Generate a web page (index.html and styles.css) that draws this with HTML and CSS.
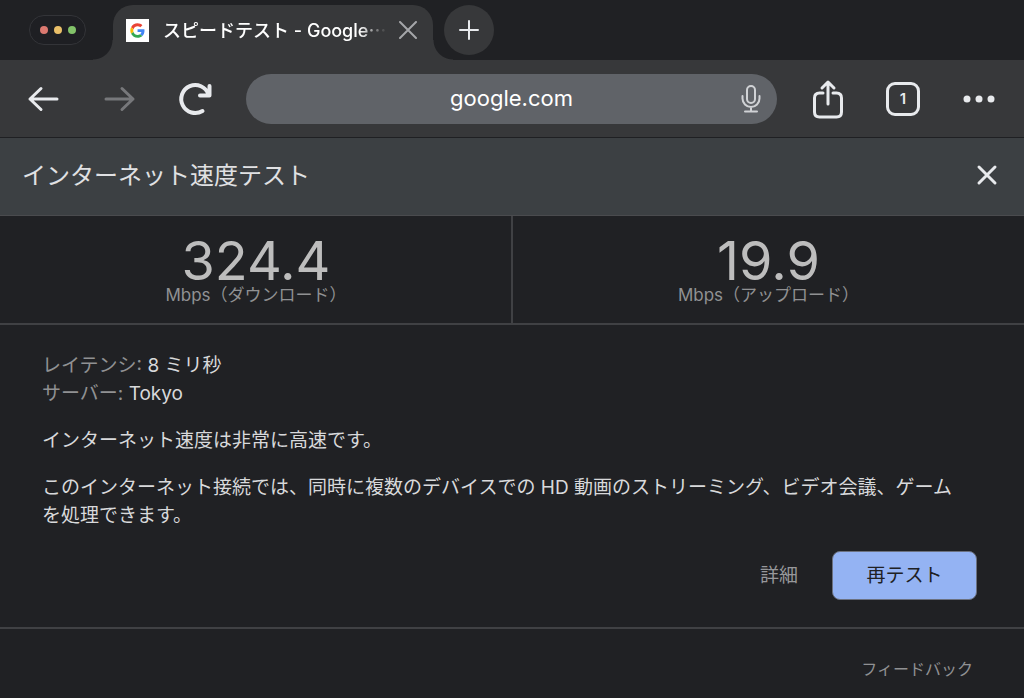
FILE: index.html
```html
<!DOCTYPE html>
<html lang="ja">
<head>
<meta charset="utf-8">
<meta name="viewport" content="width=device-width, initial-scale=1">
<title>スピードテスト - Google</title>
<link rel="stylesheet" href="styles.css">
</head>
<body>
<header class="browser">
  <div class="tabstrip">
    <div class="window-dots"><i class="dot dot-red"></i><i class="dot dot-yellow"></i><i class="dot dot-green"></i></div>
    <div class="tab">
      <svg class="favicon" viewBox="0 0 48 48" aria-hidden="true">
        <rect width="48" height="48" fill="#fff"/>
        <g transform="translate(9 9) scale(.63)">
          <path fill="#EA4335" d="M24 9.500c3.540 0 6.710 1.220 9.210 3.600l6.850-6.850C35.900 2.380 30.470 0 24 0 14.620 0 6.510 5.380 2.560 13.220l7.980 6.190C12.430 13.720 17.740 9.500 24 9.500z"/>
          <path fill="#4285F4" d="M46.980 24.550c0-1.570-.15-3.090-.38-4.550H24v9.020h12.940c-.58 2.960-2.260 5.480-4.780 7.180l7.730 6c4.510-4.180 7.090-10.360 7.090-17.650z"/>
          <path fill="#FBBC05" d="M10.530 28.590c-.48-1.450-.76-2.990-.76-4.590s.27-3.140.76-4.590l-7.980-6.190C.92 16.460 0 20.120 0 24s.92 7.540 2.560 10.780l7.970-6.190z"/>
          <path fill="#34A853" d="M24 48c6.480 0 11.930-2.130 15.890-5.810l-7.730-6c-2.150 1.450-4.920 2.300-8.160 2.300-6.260 0-11.570-4.220-13.470-9.910l-7.980 6.190C6.510 42.620 14.620 48 24 48z"/>
        </g>
      </svg>
      <span class="tab-title">スピードテスト - Google<span class="more">…</span></span>
      <button class="icon-button tab-close" aria-label="タブを閉じる"><svg width="18" height="18" viewBox="0 0 18 18"><path d="M1 1l16 16M17 1L1 17"/></svg></button>
    </div>
    <button class="icon-button new-tab" aria-label="新しいタブ"><svg width="22" height="22" viewBox="0 0 22 22"><path d="M11 2v18M2 11h18"/></svg></button>
  </div>
  <div class="toolbar">
    <button class="icon-button" aria-label="戻る"><svg width="36" height="36" viewBox="0 0 36 36"><path d="M32 18H5M16 7.500L5 18l11 10.500"/></svg></button>
    <button class="icon-button" aria-label="進む" disabled><svg width="36" height="36" viewBox="0 0 36 36"><path d="M5 18h27M21 7.500L32 18 21 28.500"/></svg></button>
    <button class="icon-button" aria-label="再読み込み"><svg width="36" height="36" viewBox="0 0 36 36"><path stroke-width="4" d="M25.500 30A14 14 0 1 1 31.500 13.500M32.500 5v9.500H23"/></svg></button>
    <div class="omnibox">
      <input class="address" type="text" value="google.com" aria-label="アドレス">
      <button class="icon-button mic" aria-label="音声検索"><svg width="22" height="30" viewBox="0 0 22 30"><rect x="7" y="2" width="8" height="17" rx="4"/><path d="M2.500 12v2.500a8.500 8.500 0 0 0 17 0V12M11 23v4M5 27.500h12"/></svg></button>
    </div>
    <button class="icon-button" aria-label="共有"><svg width="36" height="40" viewBox="0 0 36 40"><path d="M14 14H10.500Q5.500 14 5.500 19v14q0 5 5 5h17q5 0 5-5V19q0-5-5-5H24M19 25V4M13 9l6-6 6 6"/></svg></button>
    <button class="icon-button tabs-button" aria-label="タブ一覧"><span class="tab-count">1</span></button>
    <button class="icon-button" aria-label="メニュー"><svg width="36" height="36" viewBox="0 0 36 36"><g class="filled"><circle cx="6" cy="18" r="3.500"/><circle cx="18" cy="18" r="3.500"/><circle cx="30" cy="18" r="3.500"/></g></svg></button>
  </div>
</header>
<main class="speedtest">
  <div class="dialog-header">
    <h1 class="dialog-title">インターネット速度テスト</h1>
    <button class="icon-button" aria-label="閉じる"><svg width="22" height="22" viewBox="0 0 22 22"><path d="M3 3l16 16M19 3L3 19"/></svg></button>
  </div>
  <section class="results">
    <div class="result"><div class="speed">324.4</div><div class="unit">Mbps（ダウンロード）</div></div>
    <div class="result"><div class="speed">19.9</div><div class="unit">Mbps（アップロード）</div></div>
  </section>
  <section class="details">
    <div class="facts">
      <div><span class="label">レイテンシ:</span> 8 ミリ秒</div>
      <div><span class="label">サーバー:</span> Tokyo</div>
    </div>
    <p>インターネット速度は非常に高速です。</p>
    <p>このインターネット接続では、同時に複数のデバイスでの HD 動画のストリーミング、ビデオ会議、ゲームを処理できます。</p>
    <div class="actions">
      <button class="text-button">詳細</button>
      <button class="primary-button">再テスト</button>
    </div>
  </section>
  <footer class="footer"><a class="feedback" href="#feedback">フィードバック</a></footer>
</main>
</body>
</html>
```
FILE: styles.css
```css
* {
  box-sizing: border-box;
}

body {
  margin: 0;
  background: #202124;
  color: #d8d9db;
  font-family: Inter, "Noto Sans CJK JP", sans-serif;
  font-size: 19px;
  line-height: 28px;
}

button,
input {
  font: inherit;
  color: inherit;
}

.icon-button {
  display: flex;
  align-items: center;
  justify-content: center;
  flex: none;
  padding: 0;
  border: 0;
  background: none;
  color: #e8eaed;
}

.icon-button:disabled {
  color: #77787b;
}

.icon-button svg {
  display: block;
  fill: none;
  stroke: currentColor;
  stroke-width: 3;
  stroke-linecap: round;
  stroke-linejoin: round;
}

.icon-button .filled {
  fill: currentColor;
  stroke: none;
}

.tabstrip {
  display: flex;
  align-items: flex-start;
  height: 60px;
  padding: 5px 0 0 29px;
}

.window-dots {
  display: flex;
  align-items: center;
  justify-content: center;
  gap: 6px;
  width: 57px;
  height: 30px;
  margin: 10px 27px 0 0;
  border: 1px solid #333438;
  border-radius: 15px;
  background: #1e1f23;
}

.dot {
  width: 8px;
  height: 8px;
  border-radius: 50%;
}

.dot-red {
  background: #dc7970;
}

.dot-yellow {
  background: #e9bf68;
}

.dot-green {
  background: #82c269;
}

.tab {
  position: relative;
  display: flex;
  align-items: center;
  width: 320px;
  height: 55px;
  padding: 0 16px 5px 13px;
  border-radius: 20px 20px 0 0;
  background: #37383a;
}

.tab::before,
.tab::after {
  content: "";
  position: absolute;
  bottom: 0;
  width: 20px;
  height: 20px;
}

.tab::before {
  right: 100%;
  background: radial-gradient(circle at 0 0, transparent 19px, #37383a 20px);
}

.tab::after {
  left: 100%;
  background: radial-gradient(circle at 100% 0, transparent 19px, #37383a 20px);
}

.favicon {
  flex: none;
  width: 23px;
  height: 23px;
  margin-right: 14px;
}

.tab-title {
  flex: 1;
  overflow: hidden;
  color: #fff;
  font-size: 18px;
  font-weight: 500;
  white-space: nowrap;
  mask-image: linear-gradient(to right, #000 196px, transparent 224px);
}

.more {
  font-family: "Noto Sans CJK JP", sans-serif;
}

.tab-close {
  margin-left: 14px;
  color: #a5a6a9;
}

.icon-button.tab-close svg,
.icon-button.mic svg {
  stroke-width: 2;
}

.new-tab {
  width: 50px;
  height: 50px;
  margin-left: 11px;
  border-radius: 50%;
  background: #37383a;
}

.icon-button.new-tab svg {
  stroke-width: 2;
}

.toolbar {
  display: flex;
  align-items: center;
  gap: 40px;
  height: 78px;
  padding: 0 27px 0 25px;
  border-bottom: 1px solid #1f2023;
  background: #37383a;
}

.omnibox {
  display: flex;
  align-items: center;
  flex: 1;
  min-width: 0;
  height: 50px;
  margin: 0 -8px 0 -7px;
  padding: 0 15px 0 37px;
  border-radius: 25px;
  background: #606368;
}

.address {
  flex: 1;
  min-width: 0;
  padding: 0 0 2px;
  border: 0;
  outline: 0;
  background: none;
  color: #fff;
  font-size: 22px;
  text-align: center;
}

.mic {
  color: #d0d2d5;
}

.tabs-button {
  width: 36px;
  height: 36px;
}

.tab-count {
  width: 34px;
  height: 34px;
  border: 3px solid currentColor;
  border-radius: 9px;
  font-size: 15px;
  font-weight: 600;
  line-height: 28px;
}

.dialog-header {
  display: flex;
  align-items: center;
  justify-content: space-between;
  height: 78px;
  padding: 0 26px 3px 22px;
  border-bottom: 1px solid #4a4b4e;
  background: #3c4043;
}

.dialog-title {
  margin: 0;
  padding-top: 2px;
  color: #e0e1e3;
  font-size: 24px;
  font-weight: 400;
  line-height: 36px;
}

.results {
  display: grid;
  grid-template-columns: 1fr 1fr;
  border-bottom: 2px solid #404144;
}

.result {
  padding: 20px 0 18px;
  text-align: center;
}

.result + .result {
  margin-left: -1px;
  border-left: 2px solid #404144;
}

.speed {
  color: #bdbdbd;
  font-size: 54px;
  font-weight: 400;
  line-height: 50px;
}

.unit {
  color: #909193;
  font-size: 17px;
  line-height: 19px;
}

.details {
  padding: 27px 47px 27px 42px;
  border-bottom: 2px solid #404144;
}

.label {
  color: #909193;
}

.details p {
  margin: 19px 0 0;
  padding-right: 12px;
}

.actions {
  display: flex;
  align-items: center;
  justify-content: flex-end;
  gap: 34px;
  margin-top: 21px;
}

.text-button {
  padding: 0;
  border: 0;
  background: none;
  color: #97989b;
}

.primary-button {
  width: 145px;
  height: 49px;
  padding: 0;
  border: 1px solid #6b7180;
  border-radius: 8px;
  background: #94b3f3;
  color: #202124;
}

.footer {
  display: flex;
  justify-content: flex-end;
  padding: 26px 51px 15px;
}

.feedback {
  color: #909193;
  font-size: 16px;
  text-decoration: none;
}
```
